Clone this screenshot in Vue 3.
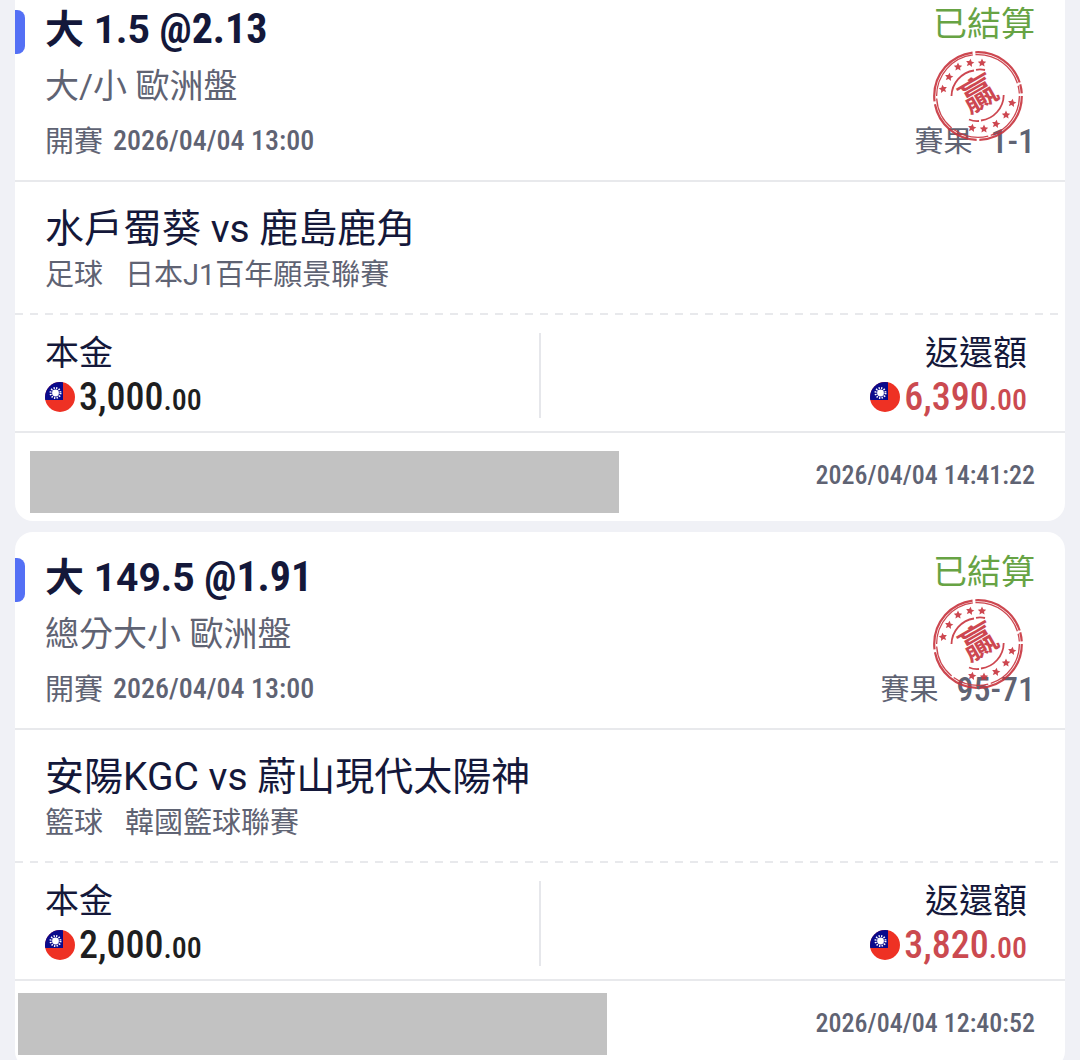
<template>
  <main class="page">
    <article v-for="bet in bets" :key="bet.time" class="card">
      <header class="head">
        <div class="pick">
          <h2 class="title">{{ bet.pick }} <span class="odds">@{{ bet.odds }}</span></h2>
          <p class="market">{{ bet.market }}</p>
          <p class="start">開賽 <time class="num">{{ bet.start }}</time></p>
        </div>
        <div class="state">
          <span class="settled">已結算</span>
          <p class="result">賽果 <span class="score">{{ bet.score }}</span></p>
          <svg class="stamp" viewBox="0 0 90 90" role="img" aria-label="贏">
            <g fill="none" stroke="#c8343e">
              <circle cx="45" cy="45" r="43.800" stroke-width="2.200" pathLength="100" stroke-dasharray="24.500 1 21.500 1 25 1 21 .7 3.300 1" />
              <circle cx="45" cy="45" r="41.400" stroke-width="1.300" pathLength="100" stroke-dasharray="20 1 14 1 13 1 23 1 21 1 3 1" />
              <path stroke-width="1.800" d="M18.500 45A26.500 26.500 0 0 1 41 19.500M43 18.800Q47.500 18 52 19M70.700 44A26 26 0 0 1 48 69.500M46 70Q41 70.500 36 68.500" />
            </g>
            <polygon
              v-for="(s, i) in stars"
              :key="i"
              :points="starPoints"
              :transform="`translate(${s[0]} ${s[1]}) rotate(${s[2]})`"
              fill="#c8343e"
            />
            <text class="stamp-text" x="46" y="56" text-anchor="middle" transform="rotate(-30 45 44)">贏</text>
          </svg>
        </div>
      </header>

      <section class="match">
        <h3 class="teams">{{ bet.teams }}</h3>
        <p class="league"><span>{{ bet.sport }}</span><span>{{ bet.league }}</span></p>
      </section>

      <section class="money">
        <div class="money-col">
          <span class="label">本金</span>
          <div class="amount">
            <svg class="flag" viewBox="0 0 30 30" aria-hidden="true">
              <circle cx="15" cy="15" r="15" fill="#ee3124" />
              <path d="M15 0A15 15 0 0 0 0 15Q0 17 .3 18H18V.3Q16.500 0 15 0Z" fill="#0a0a8c" />
              <circle cx="10.500" cy="11" r="5" fill="none" stroke="#fff" stroke-width="2" stroke-dasharray="1.300 1.318" />
              <circle cx="10.500" cy="11" r="3.400" fill="#fff" />
            </svg>
            <span>{{ bet.stake }}<small>.00</small></span>
          </div>
        </div>
        <div class="money-col right">
          <span class="label">返還額</span>
          <div class="amount win">
            <svg class="flag" viewBox="0 0 30 30" aria-hidden="true">
              <circle cx="15" cy="15" r="15" fill="#ee3124" />
              <path d="M15 0A15 15 0 0 0 0 15Q0 17 .3 18H18V.3Q16.500 0 15 0Z" fill="#0a0a8c" />
              <circle cx="10.500" cy="11" r="5" fill="none" stroke="#fff" stroke-width="2" stroke-dasharray="1.300 1.318" />
              <circle cx="10.500" cy="11" r="3.400" fill="#fff" />
            </svg>
            <span>{{ bet.payout }}<small>.00</small></span>
          </div>
        </div>
      </section>

      <footer class="foot" :class="bet.mask">
        <div class="mask"></div>
        <time class="placed">{{ bet.time }}</time>
      </footer>
    </article>
  </main>
</template>

<script setup>
const bets = [
  {
    pick: '大 1.5',
    odds: '2.13',
    market: '大/小 歐洲盤',
    start: '2026/04/04 13:00',
    score: '1-1',
    teams: '水戶蜀葵 vs 鹿島鹿角',
    sport: '足球',
    league: '日本J1百年願景聯賽',
    stake: '3,000',
    payout: '6,390',
    time: '2026/04/04 14:41:22',
    mask: 'inset',
  },
  {
    pick: '大 149.5',
    odds: '1.91',
    market: '總分大小 歐洲盤',
    start: '2026/04/04 13:00',
    score: '95-71',
    teams: '安陽KGC vs 蔚山現代太陽神',
    sport: '籃球',
    league: '韓國籃球聯賽',
    stake: '2,000',
    payout: '3,820',
    time: '2026/04/04 12:40:52',
    mask: 'edge',
  },
]

// x, y, rotation
const stars = [
  [10, 38, -10], [16, 26, 10], [25, 16, 0], [37, 12, 10], [49, 12, 0],
  [79, 52, 10], [73, 64, 0], [63, 73, 10], [51, 78, 0], [39, 77, 10],
]

const starPoints = Array.from({ length: 10 }, (_, i) => {
  const r = i % 2 ? 2.1 : 4.4
  const a = (Math.PI / 5) * i - Math.PI / 2
  return `${(r * Math.cos(a)).toFixed(2)},${(r * Math.sin(a)).toFixed(2)}`
}).join(' ')
</script>

<style>
body {
  margin: 0;
  background: #f0f1f6;
}
</style>

<style scoped>
.page {
  display: flex;
  flex-direction: column;
  gap: 11px;
  margin-top: -16px;
  padding: 0 15px;
  font-family: Roboto, "Noto Sans CJK TC", sans-serif;
  color: #5f6373;
}

.card {
  background: #fff;
  border-radius: 18px;
}

h2, h3, p {
  margin: 0;
  font-weight: 400;
}

.head {
  position: relative;
  display: flex;
  justify-content: space-between;
  padding: 22px 30px 18px;
  border-bottom: 2px solid #e8e9ec;
}

.head::before {
  content: "";
  position: absolute;
  left: 0;
  top: 26px;
  width: 10px;
  height: 44px;
  border-radius: 0 8px 8px 0;
  background: #5470f5;
}

.title {
  font-size: 39px;
  line-height: 48px;
  font-weight: 700;
  color: #14183a;
}

.market {
  margin-top: 8px;
  font-size: 34px;
  line-height: 48px;
}

.start, .result, .league {
  display: flex;
  font-size: 29px;
  line-height: 40px;
}

.start {
  gap: 10px;
  margin-top: 12px;
}

.result {
  gap: 18px;
}

.league {
  gap: 22px;
  margin-top: 2px;
}

.num, .placed, .score, .amount, .odds {
  font-family: "Roboto Condensed", Roboto, sans-serif;
}

.odds {
  font-size: 42px;
  line-height: 1;
}

.num, .score {
  font-size: 28px;
  line-height: 38px;
  font-weight: 500;
}

.score {
  font-size: 34px;
}

.state {
  display: flex;
  flex-direction: column;
  justify-content: space-between;
  align-items: flex-end;
  margin-top: -6px;
}

.settled {
  font-size: 34px;
  line-height: 48px;
  color: #67a344;
}

.stamp {
  position: absolute;
  top: 67px;
  right: 42px;
  width: 90px;
  height: 90px;
  opacity: 0.9;
}

.stamp-text {
  font-family: "Noto Sans CJK TC", sans-serif;
  font-size: 36px;
  font-weight: 700;
  fill: #c8343e;
}

.match {
  padding: 23px 30px 20px;
  background: repeating-linear-gradient(90deg, #e8e9ec 0 8px, transparent 8px 15px) left bottom / 100% 2px no-repeat;
}

.teams {
  font-size: 39px;
  line-height: 48px;
  color: #14183a;
}

.money {
  position: relative;
  display: flex;
  justify-content: space-between;
  padding: 16px 38px 12px 30px;
  border-bottom: 2px solid #e8e9ec;
}

.money::after {
  content: "";
  position: absolute;
  left: 50%;
  top: 18px;
  bottom: 13px;
  width: 2px;
  margin-left: -1px;
  background: #e6e7eb;
}

.money-col {
  display: flex;
  flex-direction: column;
}

.right {
  align-items: flex-end;
}

.label {
  font-size: 34px;
  line-height: 44px;
  color: #14183a;
}

.amount {
  display: flex;
  align-items: center;
  gap: 4px;
  height: 44px;
  font-size: 38px;
  line-height: 44px;
  font-weight: 500;
  color: #1e1e20;
}

.amount small {
  font-size: 30px;
  line-height: 1;
}

.win {
  color: #cb4a50;
}

.flag {
  width: 30px;
  height: 30px;
}

.foot {
  display: flex;
  justify-content: space-between;
  align-items: flex-start;
  height: 88px;
  padding-right: 30px;
}

.mask {
  flex: 0 1 589px;
  height: 62px;
  background: #c2c2c2;
}

.inset .mask {
  margin: 18px 0 0 15px;
}

.edge .mask {
  margin: 12px 0 0 3px;
}

.placed {
  margin-top: 22px;
  font-size: 26px;
  line-height: 40px;
  font-weight: 500;
}
</style>
